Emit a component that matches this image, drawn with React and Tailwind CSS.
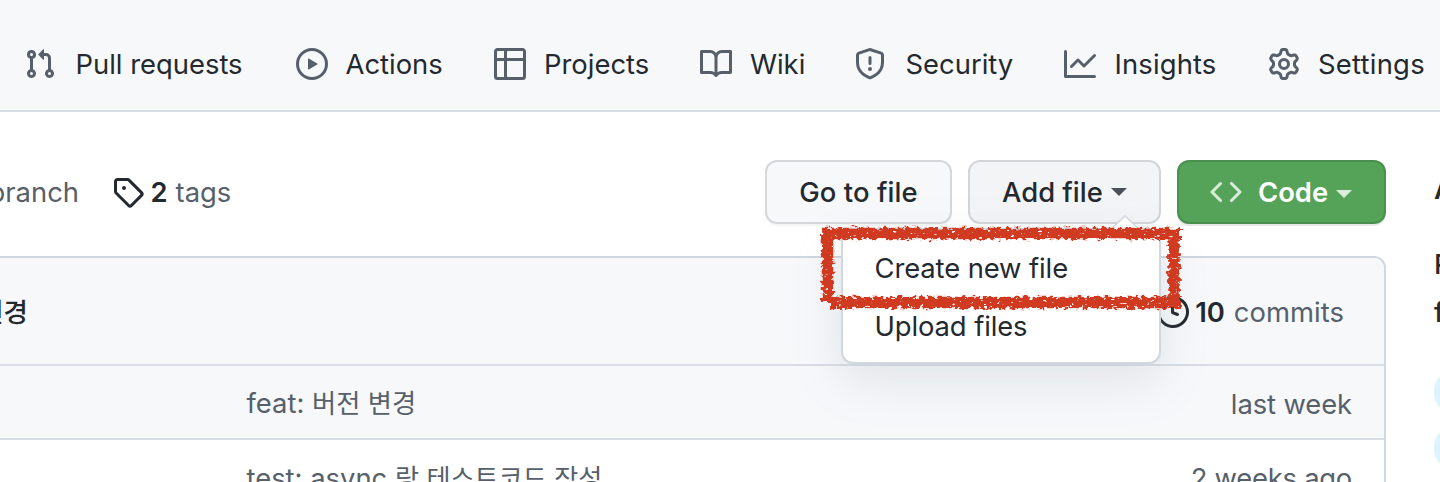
import React from "react";

const PATHS = {
  pull: "M7.177 3.073L9.573.677A.25.25 0 0110 .854v4.792a.25.25 0 01-.427.177L7.177 3.427a.25.25 0 010-.354zM3.75 2.5a.75.75 0 100 1.5.75.75 0 000-1.5zm-2.25.75a2.25 2.25 0 113 2.122v5.256a2.251 2.251 0 11-1.5 0V5.372A2.25 2.25 0 011.5 3.25zM11 2.5h-1V4h1a1 1 0 011 1v5.628a2.251 2.251 0 101.5 0V5A2.5 2.5 0 0011 2.5zm1 10.25a.75.75 0 111.5 0 .75.75 0 01-1.5 0zM3.75 12a.75.75 0 100 1.5.75.75 0 000-1.5z",
  play: "M1.5 8a6.5 6.5 0 1113 0 6.5 6.5 0 01-13 0zM8 0a8 8 0 100 16A8 8 0 008 0zM6.379 5.227A.25.25 0 006 5.442v5.117a.25.25 0 00.379.214l4.264-2.559a.25.25 0 000-.428L6.379 5.227z",
  table: "M0 1.75C0 .784.784 0 1.75 0h12.5C15.216 0 16 .784 16 1.75v12.5A1.75 1.75 0 0114.25 16H1.75A1.75 1.75 0 010 14.25V1.75zM1.75 1.5a.25.25 0 00-.25.25V5H5V1.5H1.75zM6.5 1.5V5h8V1.75a.25.25 0 00-.25-.25H6.5zm8 5h-8v8h7.75a.25.25 0 00.25-.25V6.5zm-9.5 8v-8H1.5v7.75c0 .138.112.25.25.25H5z",
  book: "M0 1.75A.75.75 0 01.75 1h4.253c1.227 0 2.317.59 3 1.501A3.744 3.744 0 0111.006 1h4.245a.75.75 0 01.75.75v10.5a.75.75 0 01-.75.75h-4.507a2.25 2.25 0 00-1.591.659l-.622.621a.75.75 0 01-1.06 0l-.622-.621A2.25 2.25 0 005.258 13H.75a.75.75 0 01-.75-.75V1.75zm8.755 3a2.25 2.25 0 012.25-2.25H14.5v9h-3.757c-.71 0-1.4.201-1.992.572l.004-7.322zm-1.504 7.324l.004-5.073-.002-2.253A2.25 2.25 0 005.003 2.5H1.5v9h3.757a3.75 3.75 0 011.994.574z",
  shield: "M7.467.133a1.748 1.748 0 0 1 1.066 0l5.25 1.68A1.75 1.75 0 0 1 15 3.48V7c0 1.566-.32 3.182-1.303 4.682-.983 1.498-2.585 2.813-5.032 3.855a1.697 1.697 0 0 1-1.33 0c-2.447-1.042-4.049-2.357-5.032-3.855C1.32 10.182 1 8.566 1 7V3.48a1.75 1.75 0 0 1 1.217-1.667Zm.61 1.429a.25.25 0 0 0-.153 0l-5.25 1.68a.25.25 0 0 0-.174.238V7c0 1.358.275 2.666 1.057 3.86.784 1.194 2.121 2.34 4.366 3.297a.196.196 0 0 0 .154 0c2.245-.956 3.582-2.104 4.366-3.298C13.225 9.666 13.5 8.36 13.5 7V3.48a.251.251 0 0 0-.174-.237l-5.25-1.68ZM8.75 4.75v3a.75.75 0 0 1-1.5 0v-3a.75.75 0 0 1 1.5 0ZM9 10.5a1 1 0 1 1-2 0 1 1 0 0 1 2 0Z",
  graph: "M1.5 1.75a.75.75 0 00-1.5 0v12.5c0 .414.336.75.75.75h14.5a.75.75 0 000-1.5H1.5V1.75zm14.28 2.53a.75.75 0 00-1.06-1.06L10 7.94 7.53 5.47a.75.75 0 00-1.06 0L3.22 8.72a.75.75 0 001.06 1.06L7 7.06l2.47 2.47a.75.75 0 001.06 0l5.25-5.25z",
  gear: "M7.429 1.525a6.593 6.593 0 011.142 0c.036.003.108.036.137.146l.289 1.105c.147.56.55.967.997 1.189.174.086.341.183.501.29.417.278.97.423 1.53.27l1.102-.303c.11-.03.175.016.195.046.219.31.41.641.573.989.014.031.022.11-.059.19l-.815.806c-.411.406-.562.957-.53 1.456a4.588 4.588 0 010 .582c-.032.499.119 1.05.53 1.456l.815.806c.08.08.073.159.059.19a6.494 6.494 0 01-.573.99c-.02.029-.086.074-.195.045l-1.103-.303c-.559-.153-1.112-.008-1.529.27-.16.107-.327.204-.5.29-.449.222-.851.628-.998 1.189l-.289 1.105c-.029.11-.101.143-.137.146a6.613 6.613 0 01-1.142 0c-.036-.003-.108-.037-.137-.146l-.289-1.105c-.147-.56-.55-.967-.997-1.189a4.502 4.502 0 01-.501-.29c-.417-.278-.97-.423-1.53-.27l-1.102.303c-.11.03-.175-.016-.195-.046a6.492 6.492 0 01-.573-.989c-.014-.031-.022-.11.059-.19l.815-.806c.411-.406.562-.957.53-1.456a4.587 4.587 0 010-.582c.032-.499-.119-1.05-.53-1.456l-.815-.806c-.08-.08-.073-.159-.059-.19a6.44 6.44 0 01.573-.99c.02-.029.086-.075.195-.045l1.103.303c.559.153 1.112.008 1.529-.27.16-.107.327-.204.5-.29.449-.222.851-.628.998-1.189l.289-1.105c.029-.11.101-.143.137-.146zM8 0c-.236 0-.47.01-.701.03-.743.065-1.29.615-1.458 1.261l-.29 1.106c-.017.066-.078.158-.211.224a5.994 5.994 0 00-.668.386c-.123.082-.233.09-.3.071L3.27 2.776c-.644-.177-1.392.02-1.82.63a7.977 7.977 0 00-.704 1.217c-.315.675-.111 1.422.363 1.891l.815.806c.05.048.098.147.088.294a6.084 6.084 0 000 .772c.01.147-.038.246-.088.294l-.815.806c-.474.469-.678 1.216-.363 1.891.2.428.436.835.704 1.218.428.609 1.176.806 1.82.63l1.103-.303c.066-.019.176-.011.299.071.213.143.436.272.668.386.133.066.194.158.212.224l.289 1.106c.169.646.715 1.196 1.458 1.26a8.094 8.094 0 001.402 0c.743-.064 1.29-.614 1.458-1.26l.29-1.106c.017-.066.078-.158.211-.224a5.98 5.98 0 00.668-.386c.123-.082.233-.09.3-.071l1.102.302c.644.177 1.392-.02 1.82-.63.268-.382.505-.789.704-1.217.315-.675.111-1.422-.364-1.891l-.814-.806c-.05-.048-.098-.147-.088-.294a6.1 6.1 0 000-.772c-.01-.147.039-.246.088-.294l.814-.806c.475-.469.679-1.216.364-1.891a7.992 7.992 0 00-.704-1.218c-.428-.609-1.176-.806-1.82-.63l-1.103.303c-.066.019-.176.011-.299-.071a5.991 5.991 0 00-.668-.386c-.133-.066-.194-.158-.212-.224L10.16 1.29C9.99.645 9.444.095 8.701.031A8.094 8.094 0 008 0zm1.5 8a1.5 1.5 0 11-3 0 1.5 1.5 0 013 0zM11 8a3 3 0 11-6 0 3 3 0 016 0z",
  tag: "M2.5 7.775V2.75a.25.25 0 01.25-.25h5.025a.25.25 0 01.177.073l6.25 6.25a.25.25 0 010 .354l-5.025 5.025a.25.25 0 01-.354 0l-6.25-6.25a.25.25 0 01-.073-.177zm-1.5 0V2.75C1 1.784 1.784 1 2.75 1h5.025c.464 0 .91.184 1.238.513l6.25 6.25a1.75 1.75 0 010 2.474l-5.026 5.026a1.75 1.75 0 01-2.474 0l-6.25-6.25A1.75 1.75 0 011 7.775zM6 5a1 1 0 100 2 1 1 0 000-2z",
  history: "M1.643 3.143L.427 1.927A.25.25 0 000 2.104V5.75c0 .138.112.25.25.25h3.646a.25.25 0 00.177-.427L2.715 4.215a6.5 6.5 0 11-1.18 4.458.75.75 0 10-1.493.154 8.001 8.001 0 101.6-5.684zM7.75 4a.75.75 0 01.75.75v2.992l2.028.812a.75.75 0 01-.557 1.392l-2.5-1A.75.75 0 017 8.25v-3.5A.75.75 0 017.75 4z",
  code: "M4.72 3.22a.75.75 0 011.06 1.06L2.06 8l3.72 3.72a.75.75 0 11-1.06 1.06L.47 8.53a.75.75 0 010-1.06l4.25-4.25zm6.56 0a.75.75 0 10-1.06 1.06L13.94 8l-3.72 3.72a.75.75 0 101.06 1.06l4.25-4.25a.75.75 0 000-1.06l-4.25-4.25z",
};

function Icon({ name, className = "" }) {
  return (
    <svg viewBox="0 0 16 16" fill="currentColor" fillRule="evenodd" className={`size-8 shrink-0 ${className}`}>
      <path d={PATHS[name]} />
    </svg>
  );
}

const TABS = [
  { icon: "pull", label: "Pull requests", width: "w-[272px]", gap: "ml-[19.5px]" },
  { icon: "play", label: "Actions", width: "w-[198px]", gap: "ml-[17.5px]" },
  { icon: "table", label: "Projects", width: "w-[206px]", gap: "ml-[18px]" },
  { icon: "book", label: "Wiki", width: "w-[154px]", gap: "ml-[18px]" },
  { icon: "shield", label: "Security", width: "w-[210px]", gap: "ml-[19.5px]" },
  { icon: "graph", label: "Insights", width: "w-[204px]", gap: "ml-[18.5px] tracking-[0.15px]" },
  { icon: "gear", label: "Settings", width: "w-[172px]", gap: "ml-[18px] tracking-[0.25px]" },
];

function Caret({ className }) {
  return (
    <svg viewBox="0 0 16 8" className={`h-2 w-4 ${className}`} fill="currentColor">
      <path d="M0 0h16L8 8z" />
    </svg>
  );
}

function AddFileMenu() {
  return (
    <div className="absolute top-[66px] -right-[2px] z-10 h-[136px] w-[320px] rounded-xl border-2 border-[#d0d7de] bg-white pt-[9px] font-normal shadow-[0_16px_48px_rgba(140,149,159,0.2)]">
      <svg viewBox="0 0 32 16" className="absolute -top-[15px] right-[18px] h-4 w-8">
        <path d="M0 16L16 1l16 15z" fill="#fff" />
        <path d="M1 15L16 1l15 14" fill="none" stroke="#d0d7de" strokeWidth="1.5" />
      </svg>
      <div className="flex h-[58px] items-center pl-[31.5px] tracking-[-0.1px]">Create new file</div>
      <div className="flex h-[58px] items-center pl-[31.5px] tracking-[-0.1px]">Upload files</div>
    </div>
  );
}

function CrayonFrame() {
  return (
    <svg viewBox="0 0 380 100" className="pointer-events-none absolute top-[218px] left-[811px] z-20 h-[100px] w-[380px]">
      <defs>
        <filter id="crayon" x="0" y="0" width="380" height="100" filterUnits="userSpaceOnUse" colorInterpolationFilters="sRGB">
          <feTurbulence type="fractalNoise" baseFrequency="0.22 0.3" numOctaves="2" seed="7" result="n" />
          <feDisplacementMap in="SourceGraphic" in2="n" scale="9" xChannelSelector="R" yChannelSelector="G" result="d" />
          <feTurbulence type="fractalNoise" baseFrequency="0.22 0.4" numOctaves="2" seed="21" result="m" />
          <feColorMatrix in="m" type="matrix" values="0 0 0 0 0  0 0 0 0 0  0 0 0 0 0  -12 0 0 0 9.2" result="mask" />
          <feComposite in="d" in2="mask" operator="in" />
        </filter>
      </defs>
      <g filter="url(#crayon)" fill="none" stroke="#d03a20" strokeWidth="11.5">
        <path d="M10 15.5H369" />
        <path d="M16.5 10V84" />
        <path d="M19 84.5H369" />
        <path d="M363 10V90" />
      </g>
    </svg>
  );
}

export default function App() {
  return (
    <div className="relative flex h-[482px] w-[1440px] flex-col overflow-hidden bg-white font-['Inter','Noto_Sans_CJK_KR',sans-serif] text-[27.4px] leading-[36px] whitespace-nowrap text-[#24292f]">
      <nav className="flex h-28 shrink-0 border-b-2 border-[#d8dee4] bg-[#f6f8fa] pt-12 pl-6">
        {TABS.map((t) => (
          <div key={t.label} className={`flex h-8 shrink-0 items-center ${t.width}`}>
            <Icon name={t.icon} className="text-[#57606a]" />
            <span className={t.gap}>{t.label}</span>
          </div>
        ))}
      </nav>

      <div className="flex min-h-0 flex-1">
        <main className="flex w-[1386px] shrink-0 flex-col pt-12">
          <div className="flex h-16 shrink-0 items-center">
            <div className="flex w-[79px] justify-end text-[#57606a]">branch</div>
            <Icon name="tag" className="ml-[33px]" />
            <span className="ml-[6.5px] font-semibold">2</span>
            <span className="ml-2 text-[#57606a]">tags</span>
            <div className="ml-auto flex gap-4 font-medium">
              <div className="flex h-16 w-[187px] items-center justify-center rounded-xl border-2 border-[#d5d8da] bg-[#f6f8fa] tracking-[0.1px] shadow-[0_2px_0_rgba(27,31,36,0.04)]">
                Go to file
              </div>
              <div className="relative flex h-16 w-[193px] items-center rounded-xl border-2 border-[#d3d5d8] bg-[#f3f4f6] pl-8">
                Add file
                <Caret className="ml-2 text-[#4c5157]" />
                <AddFileMenu />
              </div>
              <div className="flex h-16 w-[209px] items-center rounded-xl border-2 border-[#4a9150] bg-[#54a358] pl-[31px] font-semibold text-white shadow-[0_2px_0_rgba(27,31,36,0.1)]">
                <Icon name="code" className="text-[#d9ecda]" />
                <span className="ml-4">Code</span>
                <Caret className="mt-1 ml-2 text-[#dcecdd]" />
              </div>
            </div>
          </div>

          <div className="mt-8 flex h-[300px] shrink-0 flex-col overflow-hidden rounded-tr-xl border-t-2 border-r-2 border-[#d0d7de]">
            <div className="flex h-[108px] shrink-0 items-center border-b-2 border-[#d8dee4] bg-[#f6f8fa] pt-px pr-[39px]">
              <div className="flex w-[28px] justify-end text-[26.5px] font-medium">변경</div>
              <Icon name="history" className="ml-auto" />
              <span className="ml-[6px] font-semibold">10</span>
              <span className="ml-[9px] tracking-[0.05px] text-[#57606a]">commits</span>
              <span className="w-px" />
            </div>
            <div className="flex h-[74px] shrink-0 items-center justify-between border-b-2 border-[#d8dee4] bg-[#f6f8fa] pt-[3px] pr-8 pl-[246.5px] text-[#57606a]">
              <span>
                feat: <span className="text-[26.3px]">버전 변경</span>
              </span>
              <span className="tracking-[-0.1px]">last week</span>
            </div>
            <div className="flex h-[74px] shrink-0 items-center justify-between pt-[2px] pr-8 pl-[246.5px] text-[#57606a]">
              <span>
                test: async <span className="text-[26.2px]">랑 테스트코드 작성</span>
              </span>
              <span className="tracking-[-0.25px]">2 weeks ago</span>
            </div>
          </div>
        </main>

        <aside className="flex w-40 shrink-0 flex-col pt-[59px] pl-12">
          <span className="font-semibold">About</span>
          <span className="mt-[39px] font-medium">React</span>
          <span className="mt-3 font-medium">for app</span>
          <span className="mt-[38px] h-12 w-28 rounded-full bg-[#ddf4ff]" />
          <span className="mt-2 h-12 w-28 rounded-full bg-[#ddf4ff]" />
        </aside>
      </div>

      <CrayonFrame />
    </div>
  );
}
